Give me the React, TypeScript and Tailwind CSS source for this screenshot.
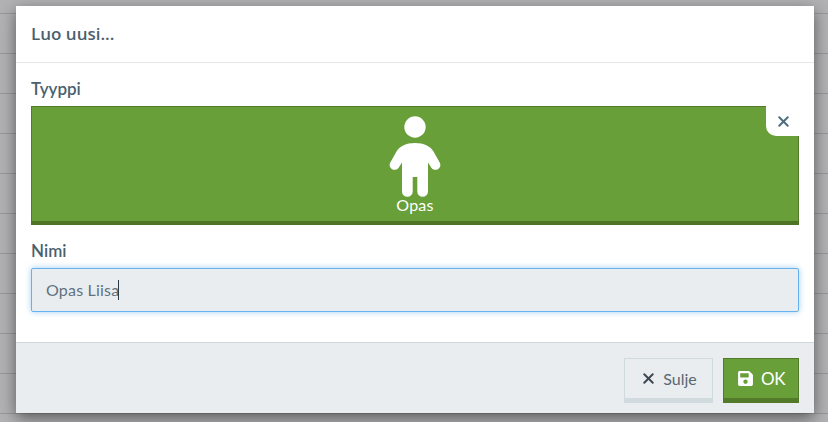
import { FaSave } from "react-icons/fa";
import { X } from "lucide-react";

const rows = Array.from({ length: 11 });

function ChildIcon() {
  return (
    <svg width="52" height="82" viewBox="0 0 52 82" fill="white" className="block">
      <circle cx="26" cy="11" r="10.7" />
      <path d="M26 27C17 27 11 30 7.500 35.500L1.300 46.500a4.900 4.900 0 0 0 8.500 4.900L13 46.500V75.500a5.350 5.350 0 0 0 10.700 0V61h4.600V75.500a5.350 5.350 0 0 0 10.700 0V46.500L42.200 51.400a4.900 4.900 0 0 0 8.500-4.900L44.500 35.500C41 30 35 27 26 27z" />
    </svg>
  );
}

export default function App() {
  return (
    <div className="relative h-[422px] w-[828px] overflow-hidden bg-[#b2b2b4] font-['Lato',sans-serif]">
      {/* table behind the backdrop */}
      <div>
        {rows.map((_, i) => (
          <div key={i} className="h-10 border-b border-[#98989a] first:h-[14px]" />
        ))}
      </div>

      <div className="absolute left-4 top-[6px] flex h-[407px] w-[798px] flex-col bg-white shadow-[0_5px_15px_rgba(0,0,0,0.5)]">
        <div className="flex h-[57px] items-center border-b border-[#e4e6e9] px-[15px]">
          <h4 className="text-[17px] font-semibold text-[#4b5f6e] [font-family:'Open_Sans',sans-serif]">Luo uusi...</h4>
        </div>

        <div className="flex-1 px-[15px] pt-[16px]">
          <label className="block h-[27px] text-[17px] leading-[20px] font-semibold text-[#4b5f6e]">Tyyppi</label>
          <div className="relative flex h-[119px] flex-col items-center border border-b-0 border-[#527a2a] bg-[#689f38]">
            <div className="mt-[9px]">
              <ChildIcon />
            </div>
            <span className="absolute bottom-[10px] text-[16px] leading-5 tracking-[0.2px] text-white">Opas</span>
            <div className="absolute bottom-0 left-[-1px] right-[-1px] h-1 bg-[#4f7426]" />
            <button className="absolute right-[-1px] top-[-1px] flex h-[30px] w-[33px] items-center justify-center rounded-bl-[10px] bg-white pl-px text-[#4f6b7d]">
              <X size={17} strokeWidth={2.8} />
            </button>
          </div>

          <label className="mt-[16px] block h-[27px] text-[17px] leading-[20px] font-semibold text-[#4b5f6e]">Nimi</label>
          <div className="flex h-[44px] items-center rounded-[2px] border border-[#66b2f0] bg-[#e9edf0] px-[14px] text-[16px] tracking-[0.2px] text-[#5f7280] shadow-[0_0_6px_rgba(102,175,233,0.6)]">
            Opas Liisa
            <span className="ml-[-1px] h-[20px] w-px bg-[#2b3c48]" />
          </div>
        </div>

        <div className="flex h-[71px] items-start justify-end gap-[10px] border-t border-[#d0d7dc] bg-[#e9edf0] px-[15px] pt-[15px]">
          <button className="flex h-[45px] w-[89px] items-center justify-center gap-[6px] border border-b-[5px] border-[#d1dade] text-[16px] text-[#5a6670]">
            <X size={17} strokeWidth={2.8} className="text-[#3d4650]" />
            Sulje
          </button>
          <button className="flex h-[45px] w-[76px] items-center justify-center gap-[7px] border border-b-[5px] border-[#527a2a] bg-[#689f38] text-[17px] tracking-[-0.5px] text-white">
            <FaSave size={17} />
            OK
          </button>
        </div>
      </div>
    </div>
  );
}
